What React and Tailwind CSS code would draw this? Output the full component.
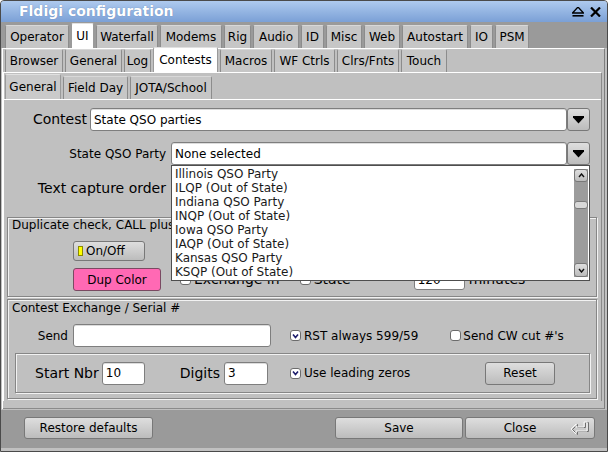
import React from "react";

const row1 = [
  { label: "Operator", w: "w-[64px]" },
  { label: "UI", w: "w-[23px]", sel: true },
  { label: "Waterfall", w: "w-[62px]" },
  { label: "Modems", w: "w-[62px]" },
  { label: "Rig", w: "w-[27px]" },
  { label: "Audio", w: "w-[46px]" },
  { label: "ID", w: "w-[23px]" },
  { label: "Misc", w: "w-[36px]" },
  { label: "Web", w: "w-[36px]" },
  { label: "Autostart", w: "w-[66px]" },
  { label: "IO", w: "w-[23px]" },
  { label: "PSM", w: "w-[34px]" },
];

const row2 = [
  { label: "Browser", w: "w-[58px]" },
  { label: "General", w: "w-[57px]" },
  { label: "Log", w: "w-[27px]" },
  { label: "Contests", w: "w-[65px]", sel: true },
  { label: "Macros", w: "w-[52px]" },
  { label: "WF Ctrls", w: "w-[61px]" },
  { label: "Clrs/Fnts", w: "w-[62px]" },
  { label: "Touch", w: "w-[46px]" },
];

const row3 = [
  { label: "General", w: "w-[56px]", sel: true },
  { label: "Field Day", w: "w-[65px]" },
  { label: "JOTA/School", w: "w-[82px]" },
];

const states = [
  "Illinois QSO Party",
  "ILQP (Out of State)",
  "Indiana QSO Party",
  "INQP (Out of State)",
  "Iowa QSO Party",
  "IAQP (Out of State)",
  "Kansas QSO Party",
  "KSQP (Out of State)",
];

const Tab = ({ label, w, sel, selBg }) => (
  <div
    className={`${w} flex items-center justify-center rounded-t-[2px] border border-b-0 text-[12px] ${
      sel
        ? `${selBg} h-[25px] border-[#9a9a9a] border-t-[#e0e0e0]`
        : "h-[23px] bg-[#c6c6c6] border-[#8c8c8c] border-t-[#d8d8d8]"
    }`}
  >
    {label}
  </div>
);

const Input = ({ className, children }) => (
  <div
    className={`flex items-center rounded-[3px] border border-[#7e7e7e] bg-white px-[3px] text-[12px] shadow-[inset_0_1px_0_#dcdcdc] ${className}`}
  >
    {children}
  </div>
);

const Btn = ({ className, children }) => (
  <div
    className={`flex items-center justify-center rounded-[3px] border border-[#787878] bg-gradient-to-b from-[#dedede] to-[#bcbcbc] text-[12px] ${className}`}
  >
    {children}
  </div>
);

const Check = ({ checked }) => (
  <div className="flex h-[11px] w-[11px] shrink-0 items-center justify-center rounded-[3px] border border-[#6c6c6c] bg-white">
    {checked && (
      <svg width="7" height="6" viewBox="0 0 7 6">
        <path d="M1 1.5 L3.5 4.5 L6 1.5" fill="none" stroke="#1c1c6c" strokeWidth="1.6" />
      </svg>
    )}
  </div>
);

const Arrow = () => (
  <Btn className="h-[23px] w-[23px]">
    <svg width="11" height="8" viewBox="0 0 11 8">
      <polygon points="0,0 11,0 11,1.5 5.5,7.5 0,1.5" fill="#000" />
    </svg>
  </Btn>
);

const StateList = () => (
  <div className="absolute left-0 top-[23px] z-10 flex h-[116px] w-[419px] border border-[#4e4e4e] bg-white">
    <div className="flex-1 pl-[3px] pt-[1px] text-[12px] leading-[14px] text-[#1a1a1a]">
      {states.map((s) => (
        <div key={s}>{s}</div>
      ))}
    </div>
    <div className="relative my-[3px] mr-[1px] flex w-[14px] flex-col bg-[#9c9c9c]">
      <Btn className="h-[13px] w-[14px]">
        <svg width="7" height="5" viewBox="0 0 7 5">
          <path d="M1 4 L3.5 1 L6 4" fill="none" stroke="#111" strokeWidth="1.4" />
        </svg>
      </Btn>
      <div className="mt-[19px] h-[8px] w-[14px] rounded-[3px] border border-[#7a7a7a] bg-[#d8d8d8]" />
      <div className="flex-1" />
      <Btn className="h-[14px] w-[14px]">
        <svg width="7" height="5" viewBox="0 0 7 5">
          <path d="M1 1 L3.5 4 L6 1" fill="none" stroke="#111" strokeWidth="1.4" />
        </svg>
      </Btn>
    </div>
  </div>
);

const Frame = ({ className, children }) => (
  <div
    className={`border border-[#868686] shadow-[inset_1px_1px_0_#f2f2f2,1px_1px_0_#f2f2f2] ${className}`}
  >
    {children}
  </div>
);

export default function App() {
  return (
    <div className="flex h-[452px] w-[608px] flex-col overflow-hidden rounded-t-[4px] border border-[#4a4a4a] bg-[#c0c0c0] font-['DejaVu_Sans',sans-serif] text-black">
      {/* Title bar */}
      <div className="flex h-[21px] shrink-0 items-center bg-gradient-to-b from-[#aecaee] to-[#7ba0d6] pl-[18px] pr-[6px]">
        <span className="text-[14px] font-bold text-white [text-shadow:0_0_1px_#5a7aa8]">
          Fldigi configuration
        </span>
        <div className="ml-auto flex items-center gap-[6px]">
          <svg width="12" height="10" viewBox="0 0 12 10">
            <polygon points="6,0 11.5,6 0.5,6" fill="none" stroke="#000" strokeWidth="1.3" />
            <rect x="0.5" y="8" width="11" height="1.6" fill="#000" />
          </svg>
          <svg width="11" height="10" viewBox="0 0 11 10">
            <path d="M1 0.5 L10 9.5 M10 0.5 L1 9.5" stroke="#000" strokeWidth="2.2" />
          </svg>
        </div>
      </div>

      {/* Top tab row */}
      <div className="flex h-[26px] shrink-0 items-end gap-[2px] bg-[#9a9a9a] pl-[4px]">
        {row1.map((t) => (
          <Tab key={t.label} {...t} selBg="bg-white" />
        ))}
      </div>

      {/* UI panel */}
      <div className="ml-[1px] mr-[2px] flex flex-col border-l border-r border-t border-l-white border-r-[#7e7e7e] border-t-white">
        <div className="flex h-[23px] items-end gap-[2px] pl-[2px]">
          {row2.map((t) => (
            <Tab key={t.label} {...t} selBg="bg-white" />
          ))}
        </div>

        {/* Contests panel */}
        <div className="mr-[2px] flex flex-col border-l border-r border-t border-l-white border-r-[#8a8a8a] border-t-white">
          <div className="flex h-[26px] items-end gap-[2px] pl-[1px]">
            {row3.map((t) => (
              <Tab key={t.label} {...t} selBg="bg-[#cacaca]" />
            ))}
          </div>

          {/* General content */}
          <div className="flex h-[302px] flex-col border-t border-t-white pt-[8px]">
            <div className="flex items-center">
              <div className="w-[83px] text-right text-[14px]">Contest</div>
              <Input className="ml-[3px] h-[23px] w-[477px]">State QSO parties</Input>
              <Arrow />
            </div>

            <div className="mt-[11px] flex items-center">
              <div className="w-[162px] text-right text-[12px]">State QSO Party</div>
              <div className="relative ml-[5px] flex">
                <Input className="h-[23px] w-[396px]">None selected</Input>
                <Arrow />
                <StateList />
              </div>
            </div>

            <div className="mt-[12px] flex h-[23px] items-center">
              <div className="w-[162px] text-right text-[14px]">Text capture order</div>
            </div>

            <Frame className="ml-[3px] mt-[17px] flex h-[80px] w-[590px] flex-col">
              <div className="pl-[4px] text-[12px] leading-[14px]">Duplicate check, CALL plus</div>
              <Btn className="ml-[65px] mt-[9px] h-[20px] w-[72px] justify-start gap-[3px] pl-[4px]">
                <div className="h-[10px] w-[5px] border border-[#8a8a00] bg-[#ffff00]" />
                <span>On/Off</span>
              </Btn>
              <div className="mt-[7px] flex h-[23px] items-center">
                <div className="ml-[65px] flex h-[23px] w-[88px] items-center justify-center rounded-[3px] border border-[#7a4a62] bg-[#ff69b4] text-[12px]">
                  Dup Color
                </div>
                <div className="ml-[19px]">
                  <Check />
                </div>
                <span className="ml-[3px] text-[14px]">Exchange in</span>
                <div className="ml-[20px]">
                  <Check />
                </div>
                <span className="ml-[3px] text-[14px]">State</span>
                <Input className="ml-[63px] h-[20px] w-[51px]">120</Input>
                <span className="ml-[4px] text-[14px]">minutes</span>
              </div>
            </Frame>

            <Frame className="ml-[3px] mt-[2px] flex h-[100px] w-[590px] flex-col">
              <div className="pl-[4px] pt-[1px] text-[12px] leading-[14px]">Contest Exchange / Serial #</div>
              <div className="mt-[9px] flex h-[23px] items-center">
                <div className="w-[60px] text-right text-[12px]">Send</div>
                <Input className="ml-[5px] h-[23px] w-[198px]" />
                <div className="ml-[19px]">
                  <Check checked />
                </div>
                <span className="ml-[3px] text-[12px]">RST always 599/59</span>
                <div className="ml-[32px]">
                  <Check />
                </div>
                <span className="ml-[2px] text-[12px]">Send CW cut #'s</span>
              </div>
              <Frame className="ml-[7px] mt-[6px] flex h-[40px] w-[575px] items-center">
                <span className="ml-[19px] text-[14px]">Start Nbr</span>
                <Input className="ml-[3px] h-[23px] w-[43px]">10</Input>
                <span className="ml-[35px] text-[14px]">Digits</span>
                <Input className="ml-[4px] h-[23px] w-[44px]">3</Input>
                <div className="ml-[22px]">
                  <Check checked />
                </div>
                <span className="ml-[3px] text-[12px]">Use leading zeros</span>
                <Btn className="ml-auto mr-[34px] h-[23px] w-[70px]">Reset</Btn>
              </Frame>
            </Frame>
          </div>
        </div>
        <div className="h-[8px] border-b border-b-[#8a8a8a]" />
      </div>

      {/* Bottom bar */}
      <div className="mt-[1px] flex h-[38px] shrink-0 items-start bg-[#9a9a9a] pt-[7px]">
        <Btn className="ml-[23px] h-[22px] w-[129px]">Restore defaults</Btn>
        <Btn className="ml-auto h-[22px] w-[128px]">Save</Btn>
        <Btn className="relative ml-[2px] mr-[12px] h-[22px] w-[130px] pr-[20px]">
          Close
          <svg className="absolute right-[5px] top-[3px]" width="19" height="14" viewBox="0 0 19 14">
            <path d="M2 9 L7 4 L7 7 L15 7 L15 2 L18 2 L18 11 L7 11 L7 14 Z" fill="none" stroke="#6e6e6e" strokeWidth="1" transform="translate(0.5 -0.5)" />
            <path d="M1 8 L6 3 L6 6 L14 6 L14 1 L17 1 L17 10 L6 10 L6 13 Z" fill="none" stroke="#f6f6f6" strokeWidth="1" />
          </svg>
        </Btn>
      </div>
    </div>
  );
}
